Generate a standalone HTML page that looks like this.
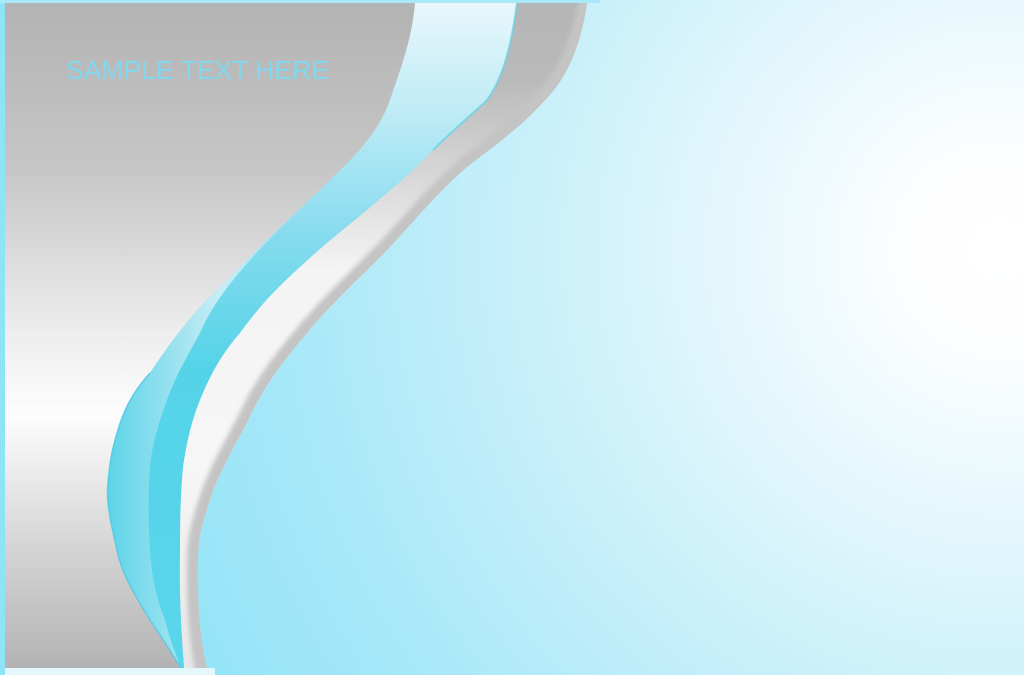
<!DOCTYPE html>
<html><head><meta charset="utf-8"><style>
html,body{margin:0;padding:0;width:1024px;height:675px;overflow:hidden;background:#fff}
svg{display:block}
</style></head><body>
<svg width="1024" height="675" viewBox="0 0 1024 675" xmlns="http://www.w3.org/2000/svg">
<defs>
<radialGradient id="bg" cx="1000" cy="250" r="950" gradientUnits="userSpaceOnUse">
<stop offset="0" stop-color="#ffffff"/>
<stop offset="0.1" stop-color="#fdfeff"/>
<stop offset="0.4" stop-color="#d6f3fb"/>
<stop offset="0.75" stop-color="#a8e8f8"/>
<stop offset="1" stop-color="#8fe3f7"/>
</radialGradient>
<linearGradient id="gray" x1="0" y1="0" x2="0" y2="1">
<stop offset="0" stop-color="#b3b3b3"/>
<stop offset="0.25" stop-color="#c6c6c6"/>
<stop offset="0.5" stop-color="#eeeeee"/>
<stop offset="0.62" stop-color="#fdfdfd"/>
<stop offset="0.8" stop-color="#d8d8d8"/>
<stop offset="1" stop-color="#b3b3b3"/>
</linearGradient>
<linearGradient id="cyan" x1="0" y1="0" x2="0" y2="1">
<stop offset="0" stop-color="#e8f7fb"/>
<stop offset="0.15" stop-color="#c2ecf6"/>
<stop offset="0.35" stop-color="#86dbee"/>
<stop offset="0.55" stop-color="#55d3e8"/>
<stop offset="1" stop-color="#5ad6ec"/>
</linearGradient>
<linearGradient id="fold" x1="0" y1="0" x2="1" y2="0">
<stop offset="0" stop-color="#5ed3e8"/>
<stop offset="0.5" stop-color="#cfeff6"/>
<stop offset="1" stop-color="#8ae0ef"/>
</linearGradient>
<linearGradient id="silvertop" x1="0" y1="0" x2="0" y2="1">
<stop offset="0" stop-color="#b5b5b5"/>
<stop offset="0.12" stop-color="#bababa"/>
<stop offset="0.22" stop-color="#cfcfcf"/>
<stop offset="0.4" stop-color="#f4f4f4"/>
<stop offset="0.7" stop-color="#f6f6f6"/>
<stop offset="1" stop-color="#e6e6e6"/>
</linearGradient>
<clipPath id="bandclip">
<path d="M517,3 L587,3 C580,50 565,80 545,100 C520,128 495,145 467,167 C440,190 415,220 390,247 C360,278 335,300 307,333 C280,365 262,390 250,417 C230,455 218,475 210,500 C202,525 198,540 198,560 C197,600 200,640 207,668 L184,668 C181,630 179,590 180,550 C180,510 181,490 183,467 C187,440 192,420 200,400 C212,370 225,350 240,333 C260,305 280,285 300,267 C320,248 345,228 367,210 C390,190 415,170 433,150 C455,128 475,112 487,100 C505,75 512,40 517,3 Z"/>
</clipPath>
<filter id="blur"><feGaussianBlur stdDeviation="2.5"/></filter>
</defs>
<rect width="1024" height="675" fill="url(#bg)"/>
<rect x="0" y="0" width="5" height="675" fill="#8fe3f7"/>
<rect x="0" y="0" width="600" height="3" fill="#a8e8f8"/>
<rect x="5" y="668" width="210" height="7" fill="#e4f7fc"/>
<!-- gray panel -->
<path d="M5,3 L587,3 C580,50 565,80 545,100 C520,128 495,145 467,167 C440,190 415,220 390,247 C360,278 335,300 307,333 C280,365 262,390 250,417 C230,455 218,475 210,500 C202,525 198,540 198,560 C197,600 200,640 207,668 L5,668 Z" fill="url(#gray)"/>
<!-- silver band -->
<g clip-path="url(#bandclip)">
<rect x="150" y="0" width="450" height="675" fill="url(#silvertop)"/>
<path d="M590,0 C580,50 565,80 545,100 C520,128 495,145 467,167 C440,190 415,220 390,247 C360,278 335,300 307,333 C280,365 262,390 250,417 C230,455 218,475 210,500 C202,525 198,540 198,560 C197,600 200,640 207,675" stroke="#c4c4c4" stroke-width="22" fill="none" filter="url(#blur)"/>
</g>
<!-- cyan ribbon -->
<path d="M415,3 L517,3 C512,40 505,75 487,100 C475,112 455,128 433,150 C415,170 390,190 367,210 C345,228 320,248 300,267 C280,285 260,305 240,333 C225,350 212,370 200,400 C192,420 187,440 183,467 C181,490 180,510 180,550 C179,590 181,630 184,668 L181,668 C170,650 160,635 150,620 C135,595 122,575 117,550 C110,520 106,500 108,483 C110,460 112,450 117,433 C125,405 135,390 150,373 C165,350 180,330 200,307 C225,282 245,262 267,240 C290,218 312,198 333,177 C360,152 380,128 390,100 C400,70 412,40 415,3 Z" fill="url(#cyan)"/>
<!-- fold strip -->
<path d="M333,177 C305,205 275,232 250,260 C230,283 212,305 200,333 C185,360 174,380 167,400 C158,425 152,445 150,467 C148,495 148,520 150,550 C152,580 157,600 165,620 C170,640 176,655 181,668 C170,650 160,635 150,620 C135,595 122,575 117,550 C110,520 106,500 108,483 C110,460 112,450 117,433 C125,405 135,390 150,373 C165,350 180,330 200,307 C225,282 245,262 267,240 C290,218 312,198 333,177 Z" fill="url(#fold)" opacity="0.92"/>
<path d="M517,3 C512,40 505,75 487,100 C475,112 455,128 433,150" stroke="#5fd3e8" stroke-width="2" fill="none" opacity="0.7"/>
<path d="M150,373 C135,390 125,405 117,433 C112,450 110,460 108,483 C106,500 110,520 117,550 C122,575 135,595 150,620 C160,635 170,650 181,668" stroke="#4cc9e2" stroke-width="1.5" fill="none" opacity="0.8"/>
<text x="66" y="79" font-family="'Liberation Sans', sans-serif" font-size="26" textLength="263" lengthAdjust="spacingAndGlyphs" fill="#80d8ef">SAMPLE TEXT HERE</text>
</svg>
</body></html>
